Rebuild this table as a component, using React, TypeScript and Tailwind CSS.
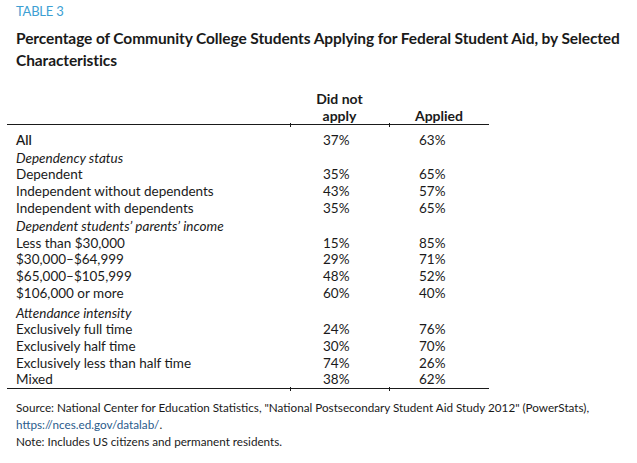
import React from "react";

type Row = { label: string; a?: string; b?: string; kind: "total" | "section" | "row"; extra?: string };

const rows: Row[] = [
  { label: "All", a: "37%", b: "63%", kind: "total" },
  { label: "Dependency status", kind: "section", extra: "mt-[1px]" },
  { label: "Dependent", a: "35%", b: "65%", kind: "row" },
  { label: "Independent without dependents", a: "43%", b: "57%", kind: "row" },
  { label: "Independent with dependents", a: "35%", b: "65%", kind: "row" },
  { label: "Dependent students\u2019 parents\u2019 income", kind: "section", extra: "mt-[1.5px]" },
  { label: "Less than $30,000", a: "15%", b: "85%", kind: "row" },
  { label: "$30,000\u2013$64,999", a: "29%", b: "71%", kind: "row" },
  { label: "$65,000\u2013$105,999", a: "48%", b: "52%", kind: "row" },
  { label: "$106,000 or more", a: "60%", b: "40%", kind: "row" },
  { label: "Attendance intensity", kind: "section", extra: "mt-[3px]" },
  { label: "Exclusively full time", a: "24%", b: "76%", kind: "row" },
  { label: "Exclusively half time", a: "30%", b: "70%", kind: "row" },
  { label: "Exclusively less than half time", a: "74%", b: "26%", kind: "row" },
  { label: "Mixed", a: "38%", b: "62%", kind: "row" },
];

function Ticks() {
  return (
    <>
      <span className="absolute left-[283px] top-[-2px] h-[4px] w-px bg-[#1a1a1a]" />
      <span className="absolute left-[382px] top-[-2px] h-[4px] w-px bg-[#1a1a1a]" />
    </>
  );
}

export default function App() {
  return (
    <div
      className="w-[637px] h-[463px] bg-white text-[#1a1a1a] overflow-hidden"
      style={{ fontFamily: "Lato, 'Open Sans', sans-serif" }}
    >
      <div className="pl-[16px] pt-[3px]">
        <div className="text-[13px] leading-[17px] text-[#3d9fd3] tracking-[-0.2px]">TABLE 3</div>
        <div className="mt-[7px] text-[15.5px] leading-[22px] font-bold tracking-[-0.1px]">
          Percentage of Community College Students Applying for Federal Student Aid, by Selected
          <br />
          Characteristics
        </div>
      </div>

      <div className="ml-[7px] mt-[19px] w-[482px] text-[13.5px]">
        <div className="grid grid-cols-[283px_99px_100px] font-bold text-[14px] leading-[17px]">
          <div />
          <div className="text-center">
            Did not
            <br />
            apply
          </div>
          <div className="flex items-end justify-center">Applied</div>
        </div>
        <div className="relative border-t border-[#1a1a1a]">
          <Ticks />
        </div>
        <div className="pt-[7px]">
          {rows.map((r, i) => (
            <div
              key={i}
              className={`grid grid-cols-[283px_99px_100px] leading-[16.7px] ${r.extra ?? ""}`}
            >
              <div className={`pl-[9px] ${r.kind === "section" ? "italic" : ""} ${r.kind === "total" ? "font-semibold" : ""}`}>
                {r.label}
              </div>
              <div className="pl-[33px]">{r.a ?? ""}</div>
              <div className="pl-[30px]">{r.b ?? ""}</div>
            </div>
          ))}
        </div>
        <div className="relative border-t border-[#1a1a1a]">
          <Ticks />
        </div>
      </div>

      <div className="pl-[16px] pt-[10px] text-[11.7px] leading-[17px]">
        <div>
          Source: National Center for Education Statistics, "National Postsecondary Student Aid Study 2012" (PowerStats),
        </div>
        <div>
          <span className="text-[#2a5b8c]">https://nces.ed.gov/datalab/</span>.
        </div>
        <div>Note: Includes US citizens and permanent residents.</div>
      </div>
    </div>
  );
}
